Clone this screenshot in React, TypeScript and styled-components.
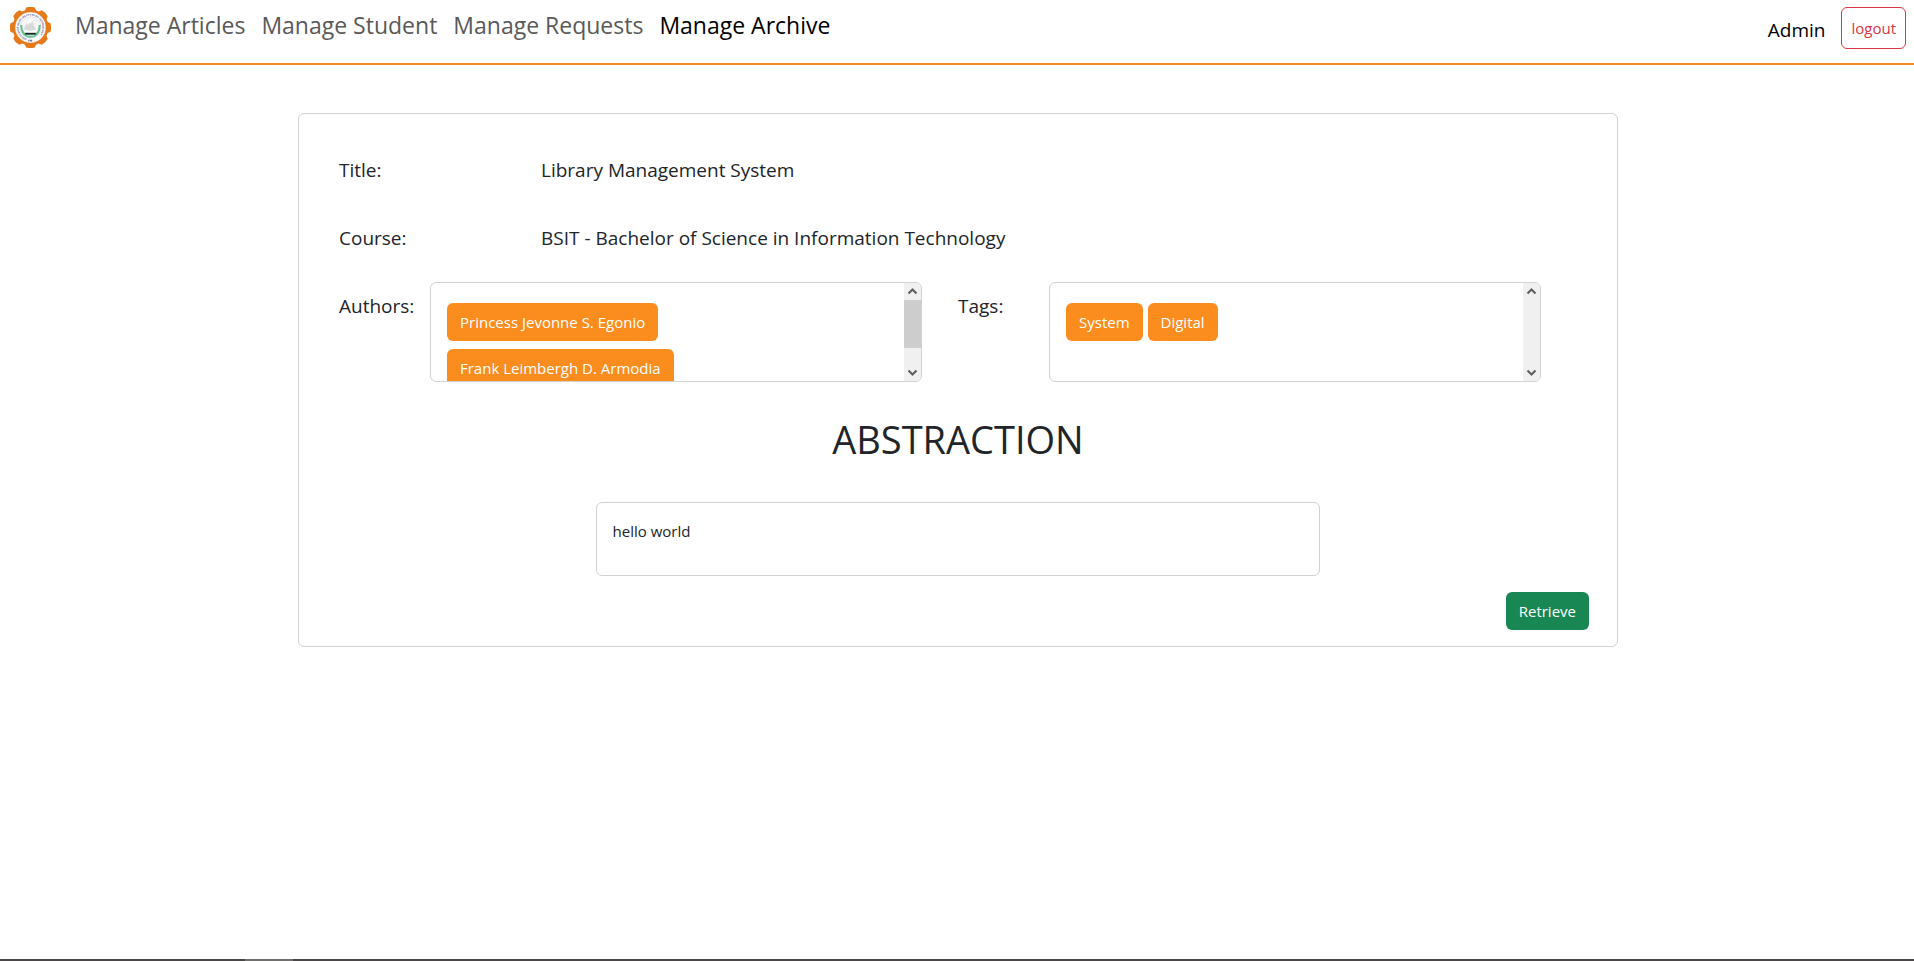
import React from "react";
import styled, { createGlobalStyle, css } from "styled-components";

const orange = "#fb8c1e";
const line = "#d2d2d2";

const GlobalStyle = createGlobalStyle`
  *, *::before, *::after { box-sizing: border-box; }
  body {
    margin: 0;
    background: #ffffff;
    color: #212529;
    font-family: "Open Sans", "Noto Sans", sans-serif;
    font-size: 15px;
    line-height: 24px;
  }
`;

const Page = styled.div`
  display: flex;
  flex-direction: column;
  min-height: 100vh;
`;

const Header = styled.header`
  display: flex;
  align-items: flex-start;
  justify-content: space-between;
  height: 65px;
  padding: 7px 8px 0 10px;
  border-bottom: 2px solid #f68b1f;
`;

const Brand = styled.a`
  display: flex;
  margin-right: 16px;
`;

const NavGroup = styled.div`
  display: flex;
  align-items: flex-start;
`;

const Nav = styled.nav`
  display: flex;
`;

const NavLink = styled.a<{ $active?: boolean }>`
  padding: 0 8px;
  color: ${(p) => (p.$active ? "#000000" : "#595959")};
  font-size: 23px;
  line-height: 36px;
  text-decoration: none;
  white-space: nowrap;
`;

const Account = styled.div`
  display: flex;
  align-items: center;
  gap: 16px;
`;

const UserLink = styled.a`
  padding-top: 4px;
  color: #000000;
  font-size: 19px;
  text-decoration: none;
`;

const buttonBase = css`
  border: 1px solid transparent;
  border-radius: 6px;
  font-family: inherit;
  font-size: 15px;
  line-height: 24px;
  white-space: nowrap;
  cursor: pointer;
`;

const LogoutButton = styled.button`
  ${buttonBase}
  padding: 8px 9px;
  border-color: #dc3545;
  background: #ffffff;
  color: #dc3545;
`;

const Main = styled.main`
  padding: 48px 14px 48px 16px;
`;

const Card = styled.article`
  max-width: 1320px;
  margin: 0 auto;
  padding: 22px 0 16px;
  border: 1px solid ${line};
  border-radius: 6px;
`;

const Details = styled.dl`
  margin: 0;
  padding: 0 76px 0 40px;
`;

const DetailRow = styled.div`
  display: grid;
  grid-template-columns: 202px 1fr;
  align-items: center;
  min-height: 68px;
  font-size: 19px;
`;

const Term = styled.dt`
  font-size: 19px;
`;

const Value = styled.dd`
  margin: 0;
`;

const Lists = styled.div`
  display: grid;
  grid-template-columns: 1fr 1fr;
  gap: 36px;
  padding: 0 76px 0 40px;
`;

const ListField = styled.section`
  display: grid;
  grid-template-columns: 91px minmax(0, 1fr);
  padding-top: 10px;
`;

const ListLabel = styled.h2`
  margin: 0;
  padding-top: 12px;
  font-size: 19px;
  font-weight: 400;
  line-height: 24px;
`;

const ListBox = styled.div`
  display: flex;
  height: 100px;
  border: 1px solid ${line};
  border-radius: 6px;
  overflow: hidden;
`;

const Pills = styled.div<{ $stacked?: boolean }>`
  display: flex;
  flex: 1;
  flex-direction: ${(p) => (p.$stacked ? "column" : "row")};
  align-items: flex-start;
  gap: ${(p) => (p.$stacked ? "8px" : "5px")};
  padding: 20px 16px;
`;

const Pill = styled.button`
  ${buttonBase}
  flex: none;
  padding: 6px 12px;
  background: ${orange};
  color: #ffffff;
`;

const ScrollTrack = styled.div`
  display: flex;
  flex-direction: column;
  width: 17px;
  background: #f0f0f0;
`;

const ScrollArrow = styled.svg`
  display: block;
  width: 17px;
  height: 17px;
  fill: none;
  stroke: #606060;
  stroke-width: 2.2;
`;

const ScrollLane = styled.div`
  flex: 1;
`;

const ScrollThumb = styled.div`
  height: 48px;
  background: #cdcdcd;
`;

const Heading = styled.h1`
  margin: 33px 0 39px;
  font-size: 38px;
  font-weight: 400;
  line-height: 48px;
  text-align: center;
`;

const Abstract = styled.p`
  width: 55%;
  min-height: 74px;
  margin: 0 auto;
  padding: 16px 16px 32px;
  border: 1px solid ${line};
  border-radius: 6px;
`;

const Actions = styled.div`
  display: flex;
  justify-content: flex-end;
  padding: 16px 28px 0;
`;

const RetrieveButton = styled.button`
  ${buttonBase}
  padding: 6px 12px;
  background: #198754;
  color: #ffffff;
`;

const BottomEdge = styled.footer`
  display: flex;
  height: 2px;
  margin-top: auto;
  padding-left: 245px;
  background: #4a4647;
`;

const EdgeMark = styled.div`
  width: 48px;
  background: #716e6e;
`;

const TEETH = 8;

function gearPath() {
  const point = (deg: number, r: number) => {
    const a = ((deg - 90) * Math.PI) / 180;
    return `${(50 + r * Math.cos(a)).toFixed(2)} ${(50 + r * Math.sin(a)).toFixed(2)}`;
  };
  const parts: string[] = [];
  for (let i = 0; i < TEETH; i++) {
    const c = (i * 360) / TEETH;
    parts.push(point(c - 18, 44), point(c - 12, 50), point(c, 51), point(c + 12, 50), point(c + 18, 44));
  }
  return `M${parts.join("L")}Z`;
}

function Logo() {
  return (
    <svg width="41" height="41" viewBox="0 0 100 100" role="img" aria-label="Institute seal">
      <path d={gearPath()} fill="#e67a1b" />
      <circle cx="50" cy="50" r="37" fill="#ffffff" stroke="#e3dcd8" strokeWidth="1" />
      <path id="seal-ring" d="M41 77.6A29 29 0 1 1 59 77.6A29 29 0 0 1 41 77.6" fill="none" />
      <text fontFamily="Liberation Sans, sans-serif" fontSize="6" fontWeight="700" fill="#3c3c78">
        <textPath href="#seal-ring">SOUTH EAST ASIAN INSTITUTE OF TECHNOLOGY</textPath>
      </text>
      <path d="M45 82h10" stroke="#3c3c78" strokeWidth="4" strokeDasharray="2 1.5" />
      <circle cx="50" cy="50" r="26" fill="#f6f6f6" stroke="#c4c4d0" strokeWidth="1" />
      <path d="M25 44c0 20 11 31 25 31s25-11 25-31h-5c0 14-5 20-11 22H41c-6-2-11-8-11-22z" fill="#62bd93" />
      <path d="M32 58l9-20 7-11 5 5 5 14 8 12z" fill="#d9d9db" />
      <path d="M42 37l6-10 5 5-1 9-4-4-5 8z" fill="#ffffff" />
      <circle cx="60" cy="37" r="4" fill="#ffffff" stroke="#c8c8c8" strokeWidth="1" />
      <path d="M35 55l15 4 15-4v5l-15 4-15-4z" fill="#ffffff" />
      <path d="M37 63h26v4H37z" fill="#222222" />
      <path d="M41 69h18v2H41z" fill="#d8efe4" />
    </svg>
  );
}

function Scrollbar({ thumb }: { thumb?: boolean }) {
  return (
    <ScrollTrack aria-hidden="true">
      <ScrollArrow viewBox="0 0 17 17">
        <path d="M4.5 10.5l4-4 4 4" />
      </ScrollArrow>
      <ScrollLane>{thumb && <ScrollThumb />}</ScrollLane>
      <ScrollArrow viewBox="0 0 17 17">
        <path d="M4.5 6.5l4 4 4-4" />
      </ScrollArrow>
    </ScrollTrack>
  );
}

const links = ["Manage Articles", "Manage Student", "Manage Requests", "Manage Archive"];
const authors = ["Princess Jevonne S. Egonio", "Frank Leimbergh D. Armodia"];
const tags = ["System", "Digital"];

export default function App() {
  return (
    <Page>
      <GlobalStyle />
      <Header>
        <NavGroup>
          <Brand href="#">
            <Logo />
          </Brand>
          <Nav>
            {links.map((label) => (
              <NavLink key={label} href="#" $active={label === "Manage Archive"}>
                {label}
              </NavLink>
            ))}
          </Nav>
        </NavGroup>
        <Account>
          <UserLink href="#">Admin</UserLink>
          <LogoutButton type="button">logout</LogoutButton>
        </Account>
      </Header>

      <Main>
        <Card>
          <Details>
            <DetailRow>
              <Term>Title:</Term>
              <Value>Library Management System</Value>
            </DetailRow>
            <DetailRow>
              <Term>Course:</Term>
              <Value>BSIT - Bachelor of Science in Information Technology</Value>
            </DetailRow>
          </Details>
          <Lists>
            <ListField>
              <ListLabel>Authors:</ListLabel>
              <ListBox>
                <Pills $stacked>
                  {authors.map((name) => (
                    <Pill key={name} type="button">
                      {name}
                    </Pill>
                  ))}
                </Pills>
                <Scrollbar thumb />
              </ListBox>
            </ListField>
            <ListField>
              <ListLabel>Tags:</ListLabel>
              <ListBox>
                <Pills>
                  {tags.map((name) => (
                    <Pill key={name} type="button">
                      {name}
                    </Pill>
                  ))}
                </Pills>
                <Scrollbar />
              </ListBox>
            </ListField>
          </Lists>
          <Heading>ABSTRACTION</Heading>
          <Abstract>hello world</Abstract>
          <Actions>
            <RetrieveButton type="button">Retrieve</RetrieveButton>
          </Actions>
        </Card>
      </Main>

      <BottomEdge>
        <EdgeMark />
      </BottomEdge>
    </Page>
  );
}
